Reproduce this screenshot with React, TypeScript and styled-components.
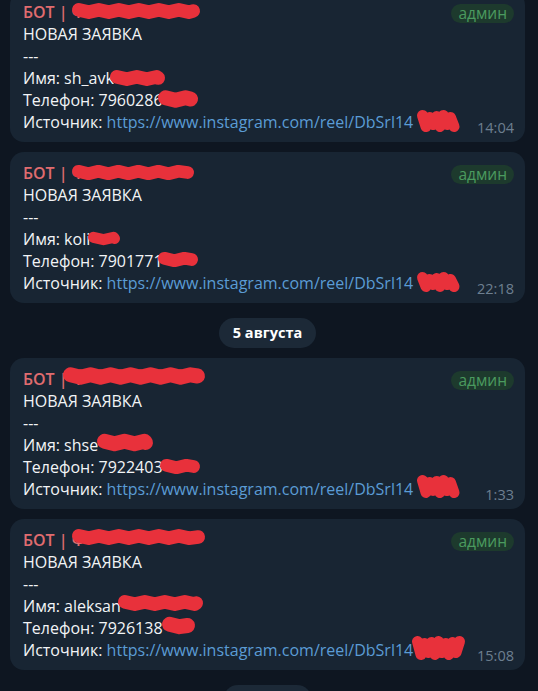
import React from "react";
import styled, { createGlobalStyle } from "styled-components";

const GlobalStyle = createGlobalStyle`
  html, body {
    margin: 0;
    padding: 0;
    background: #0e1621;
    overflow: hidden;
  }
  body {
    font-family: "Open Sans", "Noto Sans", sans-serif;
  }
`;

const Feed = styled.div`
  display: flex;
  flex-direction: column;
  gap: 10px;
  padding: 0 13px 0 10px;
  margin-top: -9px;
  height: 720px;
`;

const Bubble = styled.div`
  background: #182533;
  border-radius: 14px;
  padding: 10px 11px 9px 13px;
  display: flex;
  flex-direction: column;
  color: #f2f4f6;
  font-size: 16px;
  line-height: 22px;
`;

const Row = styled.div`
  position: relative;
  height: 22px;
  display: flex;
  align-items: center;
  white-space: nowrap;
`;

const HeaderRow = styled(Row)`
  justify-content: space-between;
`;

const LastRow = styled(Row)`
  justify-content: space-between;
`;

const Sender = styled.span`
  color: #e06c6f;
  font-weight: 600;
`;

const Badge = styled.span`
  background: #1d3a2d;
  color: #4b9a5f;
  font-size: 15.5px;
  line-height: 19px;
  height: 19px;
  padding: 0 7px;
  border-radius: 10px;
  margin-top: 2px;
`;

const Link = styled.span`
  color: #5b9cd5;
`;

const Time = styled.span`
  color: #6d7f90;
  font-size: 14.5px;
  align-self: flex-end;
  margin-bottom: -6px;
`;

const DateRow = styled.div`
  display: flex;
  justify-content: center;
  margin-top: 5px;
`;

const DatePill = styled.div<{ $w?: number }>`
  background: #1c2937;
  color: #ffffff;
  font-weight: 700;
  font-size: 14.5px;
  height: 30px;
  line-height: 30px;
  padding: 0 14px;
  border-radius: 15px;
  min-width: ${(p) => (p.$w ? `${p.$w}px` : "0")};
  box-sizing: border-box;
`;

const ScribbleSvg = styled.svg<{ $left: number; $top: number }>`
  position: absolute;
  left: ${(p) => p.$left}px;
  top: ${(p) => p.$top}px;
  overflow: visible;
`;

type Box = { left: number; top: number; w: number; h: number };

function barPath(w: number, h: number, sw: number) {
  const y = h / 2;
  const pts: string[] = [];
  let i = 0;
  for (let x = sw / 2; x <= w - sw / 2; x += 10) {
    const dy = i % 2 === 0 ? -1.2 : 1.2;
    pts.push(`${x.toFixed(1)},${(y + dy).toFixed(1)}`);
    i++;
  }
  pts.push(`${(w - sw / 2).toFixed(1)},${y.toFixed(1)}`);
  return "M" + pts.join(" L");
}

function blobPath(w: number, h: number, sw: number) {
  const pts: string[] = [];
  let i = 0;
  for (let x = sw / 2; x <= w - sw / 2; x += 3.5) {
    const y = i % 2 === 0 ? sw / 2 + (i % 3) : h - sw / 2 - (i % 4);
    pts.push(`${x.toFixed(1)},${y.toFixed(1)}`);
    i++;
  }
  return "M" + pts.join(" L");
}

const Scribble: React.FC<{ box: Box; kind: "bar" | "blob" }> = ({ box, kind }) => {
  const sw = kind === "bar" ? Math.min(box.h * 0.85, 15) : 11;
  const d = kind === "bar" ? barPath(box.w, box.h, sw) : blobPath(box.w, box.h, sw);
  return (
    <ScribbleSvg $left={box.left} $top={box.top} width={box.w} height={box.h} viewBox={`0 0 ${box.w} ${box.h}`}>
      <path d={d} fill="none" stroke="#e8313b" strokeWidth={sw} strokeLinecap="round" strokeLinejoin="round" />
    </ScribbleSvg>
  );
};

type Msg = {
  name: string;
  phone: string;
  time: string;
  nameBox: Box;
  userBox: Box;
  phoneBox: Box;
  linkBox: Box;
};

const messages: Msg[] = [
  {
    name: "sh_avk",
    phone: "7960286",
    time: "14:04",
    nameBox: { left: 49, top: 2, w: 128, h: 16 },
    userBox: { left: 87, top: 3, w: 55, h: 16 },
    phoneBox: { left: 135, top: 0, w: 40, h: 20 },
    linkBox: { left: 394, top: -1, w: 45, h: 23 },
  },
  {
    name: "koli",
    phone: "7901771",
    time: "22:18",
    nameBox: { left: 49, top: 3, w: 122, h: 15 },
    userBox: { left: 65, top: 4, w: 32, h: 13 },
    phoneBox: { left: 135, top: 2, w: 40, h: 15 },
    linkBox: { left: 394, top: 0, w: 44, h: 21 },
  },
  {
    name: "shse",
    phone: "7922403",
    time: "1:33",
    nameBox: { left: 40, top: -1, w: 142, h: 18 },
    userBox: { left: 74, top: -1, w: 56, h: 19 },
    phoneBox: { left: 137, top: 3, w: 40, h: 15 },
    linkBox: { left: 394, top: -3, w: 43, h: 24 },
  },
  {
    name: "aleksan",
    phone: "7926138",
    time: "15:08",
    nameBox: { left: 49, top: 0, w: 133, h: 16 },
    userBox: { left: 95, top: 0, w: 85, h: 16 },
    phoneBox: { left: 139, top: -1, w: 33, h: 19 },
    linkBox: { left: 389, top: -3, w: 54, h: 25 },
  },
];

const Message: React.FC<{ m: Msg }> = ({ m }) => (
  <Bubble>
    <HeaderRow>
      <Sender>БОТ | Ф</Sender>
      <Scribble box={m.nameBox} kind="bar" />
      <Badge>админ</Badge>
    </HeaderRow>
    <Row>НОВАЯ ЗАЯВКА</Row>
    <Row>---</Row>
    <Row>
      Имя: {m.name}
      <Scribble box={m.userBox} kind="bar" />
    </Row>
    <Row>
      Телефон: {m.phone}
      <Scribble box={m.phoneBox} kind="bar" />
    </Row>
    <LastRow>
      <span>
        Источник: <Link>https://www.instagram.com/reel/DbSrl14</Link>
      </span>
      <Scribble box={m.linkBox} kind="blob" />
      <Time>{m.time}</Time>
    </LastRow>
  </Bubble>
);

export default function App() {
  return (
    <>
      <GlobalStyle />
      <Feed>
        <Message m={messages[0]} />
        <Message m={messages[1]} />
        <DateRow>
          <DatePill>5 августа</DatePill>
        </DateRow>
        <Message m={messages[2]} />
        <Message m={messages[3]} />
        <DateRow>
          <DatePill $w={89} aria-hidden="true" />
        </DateRow>
      </Feed>
    </>
  );
}
